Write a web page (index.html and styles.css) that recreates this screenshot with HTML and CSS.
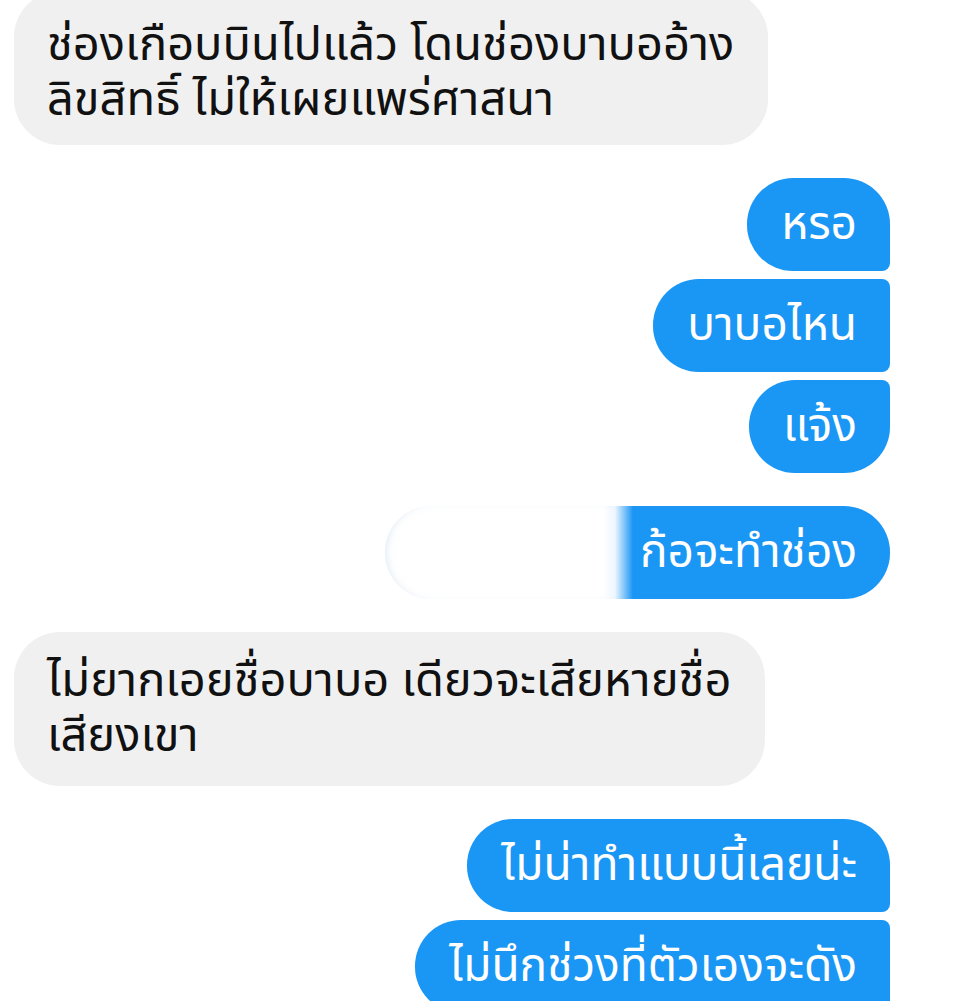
FILE: index.html
```html
<!DOCTYPE html>
<html lang="th">
<head>
    <meta charset="UTF-8">
    <meta name="viewport" content="width=device-width, initial-scale=1.0">
    <title>แชท</title>
    <link rel="stylesheet" href="styles.css">
</head>
<body>
    <div class="chat">
        <div class="row in first">
            <div class="bubble grey">ช่องเกือบบินไปแล้ว โดนช่องบาบออ้าง<br>ลิขสิทธิ์ ไม่ให้เผยแพร่ศาสนา</div>
        </div>

        <div class="group">
            <div class="row out"><div class="bubble blue top">หรอ</div></div>
            <div class="row out"><div class="bubble blue mid">บาบอไหน</div></div>
            <div class="row out"><div class="bubble blue bottom">แจ้ง</div></div>
        </div>

        <div class="row out">
            <div class="bubble blue hidden-part">ก้อจะทำช่อง</div>
        </div>

        <div class="row in">
            <div class="bubble grey">ไม่ยากเอยชื่อบาบอ เดียวจะเสียหายชื่อ<br>เสียงเขา</div>
        </div>

        <div class="group">
            <div class="row out"><div class="bubble blue top">ไม่น่าทำแบบนี้เลยน่ะ</div></div>
            <div class="row out"><div class="bubble blue mid">ไม่นึกช่วงที่ตัวเองจะดัง</div></div>
        </div>
    </div>
</body>
</html>
```

FILE: styles.css
```css
body {
    margin: 0;
    padding: 0;
    background: #ffffff;
    font-family: "Noto Sans Thai", "Noto Sans", sans-serif;
    overflow: hidden;
}
.chat {
    display: flex;
    flex-direction: column;
    gap: 33px;
    padding: 0 70px 0 14px;
}
.group {
    display: flex;
    flex-direction: column;
    gap: 8px;
}
.row {
    display: flex;
}
.row.in {
    justify-content: flex-start;
}
.row.out {
    justify-content: flex-end;
}
.row.first {
    margin-top: -9px;
}
.bubble {
    border-radius: 46px;
}
.grey {
    background: #f0f0f0;
    color: #111111;
    font-size: 47px;
    line-height: 55px;
    padding: 22px 34px 22px 33px;
}
.first .grey {
    padding-top: 27px;
    padding-bottom: 17px;
}
.blue {
    background: #1a96f5;
    color: #ffffff;
    font-size: 46px;
    height: 93px;
    box-sizing: border-box;
    padding: 0 33px 0 34px;
    display: flex;
    align-items: center;
}
.blue.top {
    border-bottom-right-radius: 8px;
}
.blue.mid {
    border-top-right-radius: 8px;
    border-bottom-right-radius: 8px;
}
.blue.bottom {
    border-top-right-radius: 8px;
}
.hidden-part {
    width: 505px;
    justify-content: flex-end;
    background: linear-gradient(90deg, #ffffff 0, #ffffff 218px, #eef6fe 230px, #1a96f5 248px);
    box-shadow: inset 6px 0 8px -6px rgba(170, 200, 230, 0.5);
}
```
